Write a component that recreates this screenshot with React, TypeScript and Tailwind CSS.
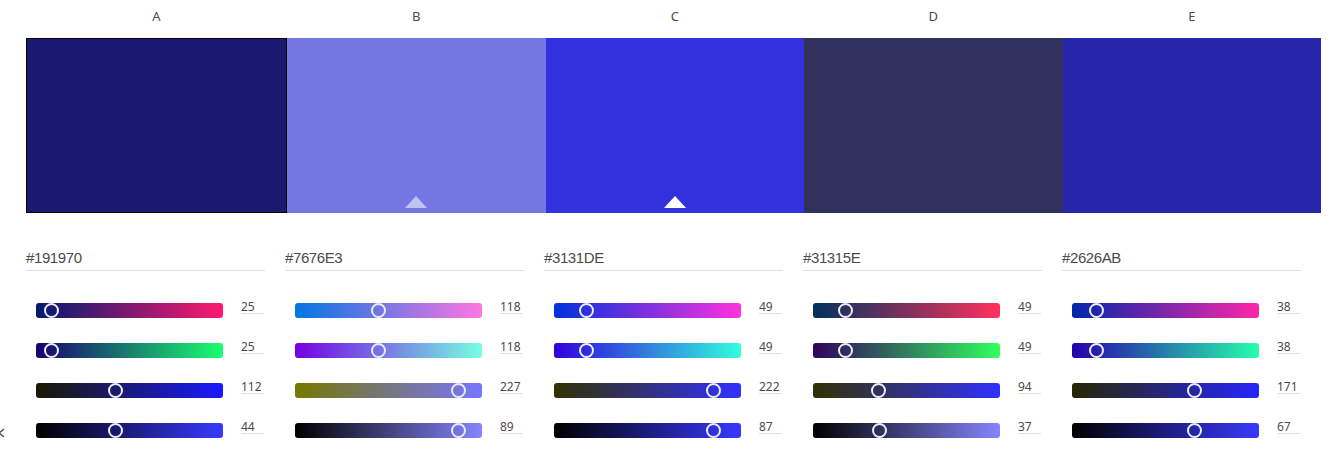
import type { CSSProperties } from "react";

type Swatch = { label: string; hex: string; rgb: [number, number, number] };

const swatches: Swatch[] = [
  { label: "A", hex: "#191970", rgb: [25, 25, 112] },
  { label: "B", hex: "#7676E3", rgb: [118, 118, 227] },
  { label: "C", hex: "#3131DE", rgb: [49, 49, 222] },
  { label: "D", hex: "#31315E", rgb: [49, 49, 94] },
  { label: "E", hex: "#2626AB", rgb: [38, 38, 171] },
];

const font: CSSProperties = { fontFamily: '"Noto Sans", "Open Sans", Arial, sans-serif' };
const hexFont: CSSProperties = { fontFamily: '"Liberation Sans", Arial, sans-serif' };

function rgb(c: number[]) {
  return `rgb(${c.map((v) => Math.round(v)).join(",")})`;
}

// build the 4 slider rows (r, g, b, brightness) for a colour
function slidersFor([r, g, b]: [number, number, number]) {
  const max = Math.max(r, g, b);
  const full = [r, g, b].map((v) => (v * 255) / max);
  const bright = Math.round((max / 255) * 100);
  return [
    { from: [0, g, b], to: [255, g, b], value: r, frac: r / 255 },
    { from: [r, 0, b], to: [r, 255, b], value: g, frac: g / 255 },
    { from: [r, g, 0], to: [r, g, 255], value: b, frac: b / 255 },
    { from: [0, 0, 0], to: full, value: bright, frac: bright / 100 },
  ];
}

function Slider({ from, to, value, frac }: { from: number[]; to: number[]; value: number; frac: number }) {
  return (
    <div className="flex items-start h-[15px]">
      <div className="ml-[10px] relative w-[187px] h-[15px] rounded-[3px]"
        style={{ background: `linear-gradient(to right, ${rgb(from)}, ${rgb(to)})` }}>
        <div className="absolute top-0 w-[15px] h-[15px] rounded-full border-2 border-[#ececf6]"
          style={{ left: frac * 187 - 3 - 7.5 }} />
      </div>
      <div className="ml-[18px] w-[23px] -mt-[4px] h-[15px] border-b border-[#e1e1e1] text-[12px] leading-[15px] text-[#4b4b4b]">
        {value}
      </div>
    </div>
  );
}

function Triangle({ faded }: { faded?: boolean }) {
  return (
    <svg className="absolute bottom-[5px] left-1/2 -translate-x-1/2" width="22" height="12" viewBox="0 0 22 12">
      <polygon points="11,0 22,12 0,12" fill="#ffffff" fillOpacity={faded ? 0.55 : 1} />
    </svg>
  );
}

export default function App() {
  return (
    <div className="relative w-[1337px] h-[457px] bg-white overflow-hidden" style={font}>
      <div className="ml-[26px] w-[1295px]">
        <div className="flex">
          {swatches.map((s, i) => (
            <div key={s.label} className={i === 0 ? "w-[261px]" : "flex-1"}>
              <div className="h-[38px] pt-[6px] text-center text-[13px] leading-[20px] text-[#4b4b4b]">{s.label}</div>
              <div className={`relative h-[175px] ${i === 0 ? "border border-black" : ""}`}
                style={{ background: s.hex }}>
                {i === 1 && <Triangle faded />}
                {i === 2 && <Triangle />}
              </div>
            </div>
          ))}
        </div>

        <div className="grid grid-cols-5 mt-[37px]">
          {swatches.map((s) => (
            <div key={s.hex}>
              <div className="w-[239px] h-[21px] border-b border-[#e1e1e1] text-[15px] leading-[16px] tracking-[-0.4px] text-[#4b4b4b]"
                style={hexFont}>
                {s.hex}
              </div>
              <div className="mt-[32px] flex flex-col gap-[25px]">
                {slidersFor(s.rgb).map((sl, j) => (
                  <Slider key={j} {...sl} />
                ))}
              </div>
            </div>
          ))}
        </div>
      </div>

      <svg className="absolute left-[-4px] top-[427px]" width="10" height="12" viewBox="0 0 10 12">
        <path d="M8 2 L3 6 L8 10" fill="none" stroke="#555" strokeWidth="1.5" />
      </svg>
    </div>
  );
}
